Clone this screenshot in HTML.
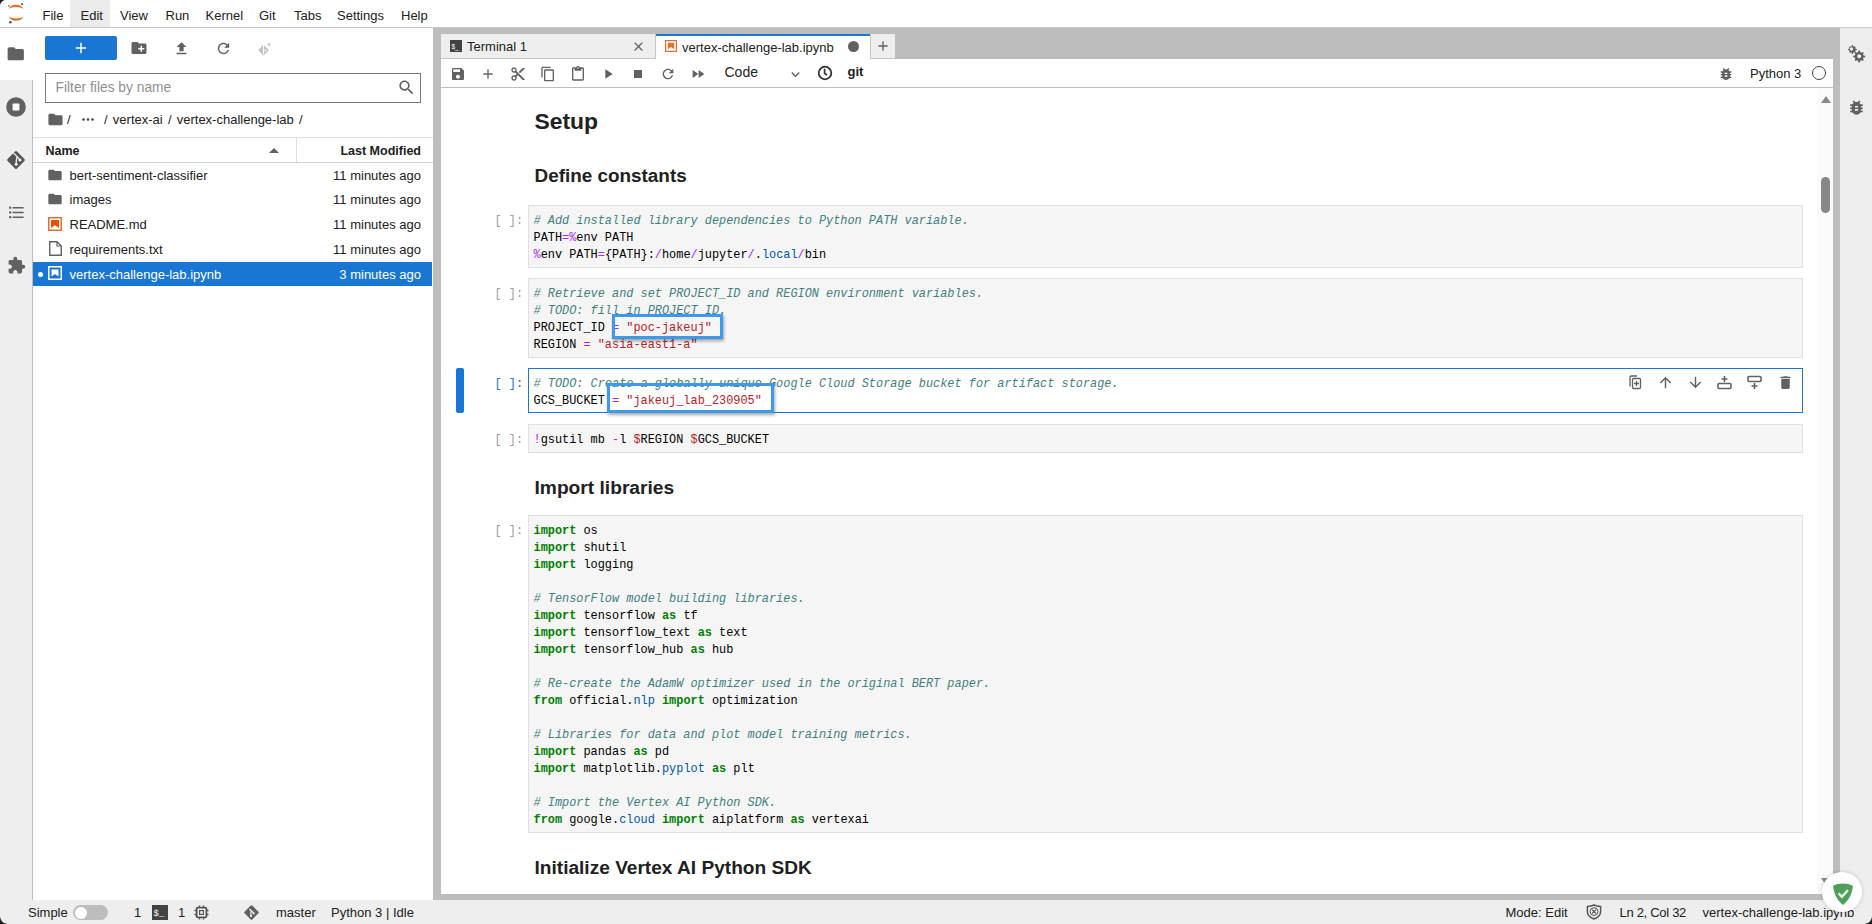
<!DOCTYPE html>
<html><head><meta charset="utf-8">
<style>
*{box-sizing:border-box;margin:0;padding:0}
html,body{width:1872px;height:924px;overflow:hidden;background:#fff;font-family:"Liberation Sans",sans-serif;font-size:13px;color:#212121;position:relative}
.a{position:absolute}
.t{position:absolute;white-space:pre}
svg{position:absolute;overflow:visible}
.k{color:#008000;font-weight:bold}
.c{color:#408080;font-style:italic}
.s{color:#ba2121}
.o{color:#aa22ff}
.p{color:#0055aa}
.n{color:#008000}
</style></head>
<body>

<div class="a" style="left:0px;top:0px;width:1872px;height:27px;background:#fff;"></div>
<div class="a" style="left:0px;top:27px;width:1872px;height:1px;background:#c8c8c8;"></div>
<div class="a" style="left:70px;top:0px;width:40px;height:27px;background:#ebebeb;"></div>
<div class="a" style="left:0px;top:28px;width:33px;height:872px;background:#eeeeee;"></div>
<div class="a" style="left:32px;top:80px;width:1px;height:820px;background:#bdbdbd;"></div>
<div class="a" style="left:0px;top:28px;width:33px;height:52px;background:#fff;"></div>
<div class="a" style="left:33px;top:28px;width:400px;height:872px;background:#fff;"></div>
<div class="a" style="left:433px;top:28px;width:1407px;height:872px;background:#bdbdbd;"></div>
<div class="a" style="left:1840px;top:28px;width:32px;height:872px;background:#eeeeee;"></div>
<div class="a" style="left:0px;top:900px;width:1872px;height:24px;background:#eeeeee;"></div>
<div class="t" style="left:42.5px;top:9.00px;font-size:13px;line-height:13px;color:#212121;font-weight:normal;font-family:'Liberation Sans',sans-serif;">File</div>
<div class="t" style="left:80.5px;top:9.00px;font-size:13px;line-height:13px;color:#212121;font-weight:normal;font-family:'Liberation Sans',sans-serif;">Edit</div>
<div class="t" style="left:120px;top:9.00px;font-size:13px;line-height:13px;color:#212121;font-weight:normal;font-family:'Liberation Sans',sans-serif;">View</div>
<div class="t" style="left:165.5px;top:9.00px;font-size:13px;line-height:13px;color:#212121;font-weight:normal;font-family:'Liberation Sans',sans-serif;">Run</div>
<div class="t" style="left:205.5px;top:9.00px;font-size:13px;line-height:13px;color:#212121;font-weight:normal;font-family:'Liberation Sans',sans-serif;">Kernel</div>
<div class="t" style="left:259px;top:9.00px;font-size:13px;line-height:13px;color:#212121;font-weight:normal;font-family:'Liberation Sans',sans-serif;">Git</div>
<div class="t" style="left:294px;top:9.00px;font-size:13px;line-height:13px;color:#212121;font-weight:normal;font-family:'Liberation Sans',sans-serif;">Tabs</div>
<div class="t" style="left:337px;top:9.00px;font-size:13px;line-height:13px;color:#212121;font-weight:normal;font-family:'Liberation Sans',sans-serif;">Settings</div>
<div class="t" style="left:401px;top:9.00px;font-size:13px;line-height:13px;color:#212121;font-weight:normal;font-family:'Liberation Sans',sans-serif;">Help</div>
<svg style="left:0px;top:0px" width="30" height="27" viewBox="0 0 30 27">
<path d="M8.6 9 C10.5 3.2 21.5 3.2 23.4 9 C20.5 6.3 11.5 6.3 8.6 9Z" fill="#e46e2e"/>
<path d="M8.6 16.2 C10.5 22.2 21.5 22.2 23.4 16.2 C20.5 19.2 11.5 19.2 8.6 16.2Z" fill="#e46e2e"/>
<circle cx="22.2" cy="4.2" r="1.1" fill="#616262"/>
<circle cx="8.9" cy="5.8" r="0.9" fill="#767677"/>
<circle cx="10.3" cy="22.2" r="1.25" fill="#4d4d4d"/>
</svg>
<svg style="left:0;top:0" width="6" height="6" viewBox="0 0 6 6"><path d="M0 6C0 2.7 2.7 0 6 0H0Z" fill="#1c1c1c"/></svg>
<svg style="left:6.25px;top:44.25px;" width="19.5" height="19.5" viewBox="0 0 24 24"><path fill="#616161" d="M10 4H4c-1.1 0-1.99.9-1.99 2L2 18c0 1.1.9 2 2 2h16c1.1 0 2-.9 2-2V8c0-1.1-.9-2-2-2h-8l-2-2z"/></svg>
<svg style="left:6.2px;top:96.8px" width="20" height="20" viewBox="0 0 20 20"><circle cx="10" cy="10" r="9.8" fill="#616161"/><rect x="6.6" y="6.6" width="6.8" height="6.8" fill="#fff" rx="0.6"/></svg>
<svg style="left:0px;top:145px" width="33" height="30" viewBox="0 145 33 30"><rect x="9.3" y="153.3" width="13.4" height="13.4" rx="1.5" transform="rotate(45 16 160)" fill="#555"/><path d="M13.2 152.6 L17.2 156.8 L20.3 160.3 M17 157 C16.2 159 16.2 161 16.2 164" fill="none" stroke="#eee" stroke-width="1.3"/><circle cx="16.2" cy="164.2" r="1.5" fill="#eee"/><circle cx="20" cy="160" r="1.6" fill="#eee"/></svg>
<svg style="left:6.70px;top:203.10px;" width="19" height="19" viewBox="0 0 24 24"><path fill="#616161" d="M4 10.5c-.83 0-1.5.67-1.5 1.5s.67 1.5 1.5 1.5 1.5-.67 1.5-1.5-.67-1.5-1.5-1.5zm0-6c-.83 0-1.5.67-1.5 1.5S3.17 7.5 4 7.5 5.5 6.83 5.5 6 4.830 4.5 4 4.5zm0 12c-.83 0-1.5.68-1.5 1.5s.68 1.5 1.5 1.5 1.5-.68 1.5-1.5-.67-1.5-1.5-1.5zM7 19h14v-2H7v2zm0-6h14v-2H7v2zm0-8v2h14V5H7z"/></svg>
<svg style="left:7.00px;top:256.00px;" width="19" height="19" viewBox="0 0 24 24"><path fill="#616161" d="M20.5 11H19V7c0-1.1-.9-2-2-2h-4V3.5C13 2.12 11.88 1 10.5 1S8 2.12 8 3.5V5H4c-1.1 0-1.99.9-1.99 2v3.8H3.5c1.49 0 2.7 1.21 2.7 2.7s-1.21 2.7-2.7 2.7H2V20c0 1.1.9 2 2 2h3.8v-1.5c0-1.49 1.21-2.7 2.7-2.7 1.49 0 2.7 1.21 2.7 2.7V22H17c1.1 0 2-.9 2-2v-4h1.5c1.38 0 2.5-1.12 2.5-2.5S21.88 11 20.5 11z"/></svg>
<div class="a" style="left:45px;top:36px;width:72px;height:24px;background:#1976d2;border-radius:2px;"></div>
<svg style="left:72.00px;top:39.00px;" width="18" height="18" viewBox="0 0 24 24"><path fill="#fff" d="M19 13h-6v6h-2v-6H5v-2h6V5h2v6h6v2z"/></svg>
<svg style="left:130.00px;top:39.00px;" width="18" height="18" viewBox="0 0 24 24"><path fill="#616161" d="M20 6h-8l-2-2H4c-1.1 0-1.99.9-1.99 2L2 18c0 1.1.9 2 2 2h16c1.1 0 2-.9 2-2V8c0-1.1-.9-2-2-2zm-1 8h-3v3h-2v-3h-3v-2h3V9h2v3h3v2z"/></svg>
<svg style="left:172.50px;top:39.50px;" width="17" height="17" viewBox="0 0 24 24"><path fill="#616161" d="M9 16h6v-6h4l-7-7-7 7h4zm-4 2h14v2H5z"/></svg>
<svg style="left:214.50px;top:39.50px;" width="17" height="17" viewBox="0 0 24 24"><path fill="#616161" d="M17.65 6.35C16.2 4.9 14.21 4 12 4c-4.42 0-7.99 3.58-7.99 8s3.57 8 7.99 8c3.73 0 6.84-2.55 7.73-6h-2.08c-.82 2.33-3.04 4-5.65 4-3.31 0-6-2.690-6-6s2.69-6 6-6c1.66 0 3.14.69 4.22 1.78L13 11h7V4l-2.35 2.35z"/></svg>
<svg style="left:250px;top:36px" width="30" height="26" viewBox="250 36 30 26"><rect x="259.6" y="46.2" width="7.8" height="7.8" rx="1" transform="rotate(45 263.5 50.1)" fill="#c4c4c4"/><path d="M263.6 45.2V54" stroke="#fff" stroke-width="1"/><circle cx="265.5" cy="50.3" r="0.9" fill="#fff"/><rect x="267.5" y="43" width="3" height="3" transform="rotate(45 269 44.5)" fill="#cfcfcf"/></svg>
<div class="a" style="left:45px;top:73px;width:376px;height:30px;border:1px solid #7a7a7a;background:#fff"></div>
<div class="t" style="left:55.5px;top:81.32px;font-size:13.8px;line-height:13.8px;color:#8f8f8f;font-weight:normal;font-family:'Liberation Sans',sans-serif;">Filter files by name</div>
<svg style="left:396.50px;top:77.50px;" width="19" height="19" viewBox="0 0 24 24"><path fill="#616161" d="M15.5 14h-.79l-.28-.27C15.41 12.59 16 11.11 16 9.5 16 5.91 13.09 3 9.5 3S3 5.91 3 9.5 5.91 16 9.5 16c1.61 0 3.09-.59 4.230-1.57l.27.28v.79l5 4.99L20.49 19l-4.99-5zm-6 0C7.01 14 5 11.99 5 9.5S7.01 5 9.5 5 14 7.01 14 9.5 11.99 14 9.5 14z"/></svg>
<svg style="left:46.50px;top:111.00px;" width="17" height="17" viewBox="0 0 24 24"><path fill="#616161" d="M10 4H4c-1.1 0-1.99.9-1.99 2L2 18c0 1.1.9 2 2 2h16c1.1 0 2-.9 2-2V8c0-1.1-.9-2-2-2h-8l-2-2z"/></svg>
<div class="t" style="left:67px;top:113.00px;font-size:13px;line-height:13px;color:#212121;font-weight:normal;font-family:'Liberation Sans',sans-serif;">/</div>
<svg style="left:82px;top:118px" width="12" height="3" viewBox="0 0 12 3"><circle cx="1.5" cy="1.5" r="1.3" fill="#424242"/><circle cx="6" cy="1.5" r="1.3" fill="#424242"/><circle cx="10.5" cy="1.5" r="1.3" fill="#424242"/></svg>
<div class="t" style="left:104px;top:113.00px;font-size:13px;line-height:13px;color:#212121;font-weight:normal;font-family:'Liberation Sans',sans-serif;word-spacing:1.6px;">/ vertex-ai / vertex-challenge-lab /</div>
<div class="a" style="left:33px;top:137px;width:400px;height:1px;background:#e0e0e0;"></div>
<div class="a" style="left:33px;top:162px;width:400px;height:1px;background:#d0d0d0;"></div>
<div class="a" style="left:296px;top:138px;width:1px;height:24px;background:#e0e0e0;"></div>
<div class="t" style="left:45.5px;top:145.42px;font-size:12.5px;line-height:12.5px;color:#212121;font-weight:bold;font-family:'Liberation Sans',sans-serif;">Name</div>
<svg style="left:269px;top:147.5px" width="10" height="5" viewBox="0 0 10 5"><path d="M0 5L5 0L10 5Z" fill="#616161"/></svg>
<div class="t" style="left:300px;width:121px;text-align:right;top:145.4px;font-size:12.5px;line-height:12.5px;font-weight:bold">Last Modified</div>
<svg style="left:46.80px;top:166.80px;" width="16" height="16" viewBox="0 0 24 24"><path fill="#616161" d="M10 4H4c-1.1 0-1.99.9-1.99 2L2 18c0 1.1.9 2 2 2h16c1.1 0 2-.9 2-2V8c0-1.1-.9-2-2-2h-8l-2-2z"/></svg>
<div class="t" style="left:69.5px;top:169.00px;font-size:13px;line-height:13px;color:#212121;font-weight:normal;font-family:'Liberation Sans',sans-serif;">bert-sentiment-classifier</div>
<div class="t" style="left:300px;width:121px;text-align:right;top:169.00px;font-size:13px;line-height:13px;color:#212121">11 minutes ago</div>
<svg style="left:46.80px;top:190.80px;" width="16" height="16" viewBox="0 0 24 24"><path fill="#616161" d="M10 4H4c-1.1 0-1.99.9-1.99 2L2 18c0 1.1.9 2 2 2h16c1.1 0 2-.9 2-2V8c0-1.1-.9-2-2-2h-8l-2-2z"/></svg>
<div class="t" style="left:69.5px;top:193.00px;font-size:13px;line-height:13px;color:#212121;font-weight:normal;font-family:'Liberation Sans',sans-serif;">images</div>
<div class="t" style="left:300px;width:121px;text-align:right;top:193.00px;font-size:13px;line-height:13px;color:#212121">11 minutes ago</div>
<svg style="left:48px;top:216.8px" width="14" height="14" viewBox="0 0 14 14"><rect x="0.75" y="0.75" width="12.5" height="12.5" fill="#fff" stroke="#e46e2e" stroke-width="1.5"/><path d="M3 3H11V11L7 8.3L3 11Z" fill="#e65100"/></svg>
<div class="t" style="left:69.5px;top:218.00px;font-size:13px;line-height:13px;color:#212121;font-weight:normal;font-family:'Liberation Sans',sans-serif;">README.md</div>
<div class="t" style="left:300px;width:121px;text-align:right;top:218.00px;font-size:13px;line-height:13px;color:#212121">11 minutes ago</div>
<svg style="left:49px;top:240.8px" width="13" height="15" viewBox="0 0 13 15"><path d="M0.75 0.75H8L12.25 5V14.25H0.75Z" fill="none" stroke="#616161" stroke-width="1.4"/><path d="M8 0.75V5H12.25" fill="none" stroke="#616161" stroke-width="1.2"/></svg>
<div class="t" style="left:69.5px;top:242.50px;font-size:13px;line-height:13px;color:#212121;font-weight:normal;font-family:'Liberation Sans',sans-serif;">requirements.txt</div>
<div class="t" style="left:300px;width:121px;text-align:right;top:242.50px;font-size:13px;line-height:13px;color:#212121">11 minutes ago</div>
<div class="a" style="left:33px;top:262px;width:399px;height:24px;background:#1976d2;"></div>
<div class="a" style="left:38px;top:272px;width:5px;height:5px;border-radius:50%;background:#fff"></div>
<svg style="left:48px;top:266.3px" width="14" height="14" viewBox="0 0 14 14"><rect x="0.75" y="0.75" width="12.5" height="12.5" fill="none" stroke="#fff" stroke-width="1.5"/><path d="M3.5 3.5H10.5V10.5L7 8L3.5 10.5Z" fill="#fff"/></svg>
<div class="t" style="left:69.5px;top:267.50px;font-size:13px;line-height:13px;color:#fff;font-weight:normal;font-family:'Liberation Sans',sans-serif;">vertex-challenge-lab.ipynb</div>
<div class="t" style="left:300px;width:121px;text-align:right;top:267.50px;font-size:13px;line-height:13px;color:#fff">3 minutes ago</div>
<div class="a" style="left:441px;top:34px;width:215px;height:25px;background:#eeeeee;border-right:1px solid #c6c6c6;border-bottom:1px solid #c6c6c6;"></div>
<svg style="left:450px;top:40px" width="12" height="12" viewBox="0 0 12 12"><rect width="12" height="12" fill="#424242"/><text x="1.5" y="8.5" font-family="Liberation Sans" font-size="6.5" fill="#fff">$_</text></svg>
<div class="t" style="left:467px;top:40.00px;font-size:13px;line-height:13px;color:#212121;font-weight:normal;font-family:'Liberation Sans',sans-serif;">Terminal 1</div>
<svg style="left:631.00px;top:38.50px;" width="15" height="15" viewBox="0 0 24 24"><path fill="#616161" d="M19 6.41L17.59 5 12 10.59 6.41 5 5 6.41 10.59 12 5 17.59 6.41 19 12 13.41 17.59 19 19 17.59 13.41 12z"/></svg>
<div class="a" style="left:656px;top:34px;width:214px;height:26px;background:#fff;"></div>
<div class="a" style="left:656px;top:34px;width:214px;height:2px;background:#1976d2;"></div>
<svg style="left:665px;top:40px" width="12" height="12" viewBox="0 0 12 12"><rect x="0.6" y="0.6" width="10.8" height="10.8" fill="#fff" stroke="#e46e2e" stroke-width="1.2"/><path d="M2.8 2.8H9.2V9.2L6 7L2.8 9.2Z" fill="#e46e2e"/></svg>
<div class="t" style="left:682px;top:41.00px;font-size:13px;line-height:13px;color:#212121;font-weight:normal;font-family:'Liberation Sans',sans-serif;">vertex-challenge-lab.ipynb</div>
<div class="a" style="left:848px;top:41px;width:11px;height:11px;border-radius:50%;background:#616161"></div>
<div class="a" style="left:870px;top:34px;width:25px;height:25px;background:#eeeeee;border-left:1px solid #c6c6c6;border-bottom:1px solid #c6c6c6;"></div>
<svg style="left:875.00px;top:38.00px;" width="16" height="16" viewBox="0 0 24 24"><path fill="#616161" d="M19 13h-6v6h-2v-6H5v-2h6V5h2v6h6v2z"/></svg>
<div class="a" style="left:441px;top:59px;width:1392px;height:29px;background:#fff;"></div>
<div class="a" style="left:441px;top:87px;width:1392px;height:1px;background:#bdbdbd;"></div>
<svg style="left:450.00px;top:66.00px;" width="16" height="16" viewBox="0 0 24 24"><path fill="#616161" d="M17 3H5c-1.11 0-2 .9-2 2v14c0 1.1.89 2 2 2h14c1.1 0 2-.9 2-2V7l-4-4zm-5 16c-1.66 0-3-1.34-3-3s1.34-3 3-3 3 1.34 3 3-1.34 3-3 3zm3-10H5V5h10v4z"/></svg>
<svg style="left:480.00px;top:66.00px;" width="16" height="16" viewBox="0 0 24 24"><path fill="#616161" d="M19 13h-6v6h-2v-6H5v-2h6V5h2v6h6v2z"/></svg>
<svg style="left:509.60px;top:66.00px;" width="16" height="16" viewBox="0 0 24 24"><path fill="#616161" d="M9.64 7.64c.23-.5.36-1.05.36-1.640 0-2.21-1.79-4-4-4S2 3.79 2 6s1.79 4 4 4c.59 0 1.14-.13 1.64-.36L10 12l-2.36 2.36C7.14 14.13 6.59 14 6 14c-2.21 0-4 1.79-4 4s1.79 4 4 4 4-1.79 4-4c0-.59-.13-1.14-.36-1.64L12 14l7 7h3v-1L9.64 7.64zM6 8c-1.1 0-2-.89-2-2s.9-2 2-2 2 .89 2 2-.9 2-2 2zm0 12c-1.1 0-2-.89-2-2s.9-2 2-2 2 .89 2 2-.9 2-2 2zm6-7.5c-.28 0-.5-.22-.5-.5s.22-.5.5-.5.5.22.5.5-.22.5-.5.5zM19 3l-6 6 2 2 7-7V3z"/></svg>
<svg style="left:539.70px;top:66.00px;" width="16" height="16" viewBox="0 0 24 24"><path fill="#616161" d="M16 1H4c-1.1 0-2 .9-2 2v14h2V3h12V1zm3 4H8c-1.1 0-2 .9-2 2v14c0 1.1.9 2 2 2h11c1.1 0 2-.9 2-2V7c0-1.1-.9-2-2-2zm0 16H8V7h11v14z"/></svg>
<svg style="left:569.90px;top:66.00px;" width="16" height="16" viewBox="0 0 24 24"><path fill="#616161" d="M19 2h-4.18C14.4.84 13.3 0 12 0c-1.3 0-2.4.84-2.82 2H5c-1.1 0-2 .9-2 2v16c0 1.1.9 2 2 2h14c1.1 0 2-.9 2-2V4c0-1.1-.9-2-2-2zm-7 0c.55 0 1 .45 1 1s-.45 1-1 1-1-.45-1-1 .45-1 1-1zm7 18H5V4h2v3h10V4h2v16z"/></svg>
<svg style="left:600.00px;top:66.00px;" width="16" height="16" viewBox="0 0 24 24"><path fill="#616161" d="M8 5v14l11-7z"/></svg>
<svg style="left:630.00px;top:66.00px;" width="16" height="16" viewBox="0 0 24 24"><path fill="#616161" d="M6 6h12v12H6z"/></svg>
<svg style="left:660.00px;top:66.00px;" width="16" height="16" viewBox="0 0 24 24"><path fill="#616161" d="M17.65 6.35C16.2 4.9 14.21 4 12 4c-4.42 0-7.99 3.58-7.99 8s3.57 8 7.99 8c3.73 0 6.84-2.55 7.73-6h-2.08c-.82 2.33-3.04 4-5.65 4-3.31 0-6-2.690-6-6s2.69-6 6-6c1.66 0 3.14.69 4.22 1.78L13 11h7V4l-2.35 2.35z"/></svg>
<svg style="left:690.00px;top:66.00px;" width="16" height="16" viewBox="0 0 24 24"><path fill="#616161" d="M4 18l8.5-6L4 6v12zm9-12v12l8.5-6L13 6z"/></svg>
<div class="t" style="left:724.5px;top:64.95px;font-size:14px;line-height:14px;color:#212121;font-weight:normal;font-family:'Liberation Sans',sans-serif;">Code</div>
<svg style="left:786.50px;top:66.00px;" width="17" height="17" viewBox="0 0 24 24"><path fill="#616161" d="M16.59 8.59L12 13.17 7.41 8.59 6 10l6 6 6-6z"/></svg>
<svg style="left:817.3px;top:64.6px" width="16" height="16" viewBox="0 0 16 16"><circle cx="8" cy="8" r="6.3" fill="none" stroke="#333" stroke-width="1.8"/><path d="M7.6 3.8V8.3L10 10" fill="none" stroke="#333" stroke-width="1.7"/></svg>
<div class="t" style="left:847.5px;top:65.00px;font-size:13px;line-height:13px;color:#212121;font-weight:bold;font-family:'Liberation Sans',sans-serif;">git</div>
<svg style="left:1717.50px;top:65.70px;" width="16" height="16" viewBox="0 0 24 24"><path fill="#616161" d="M20 8h-2.81c-.45-.78-1.07-1.45-1.82-1.96L17 4.41 15.59 3l-2.17 2.17C12.96 5.06 12.49 5 12 5c-.49 0-.96.06-1.41.17L8.410 3 7 4.41l1.62 1.63C7.88 6.55 7.26 7.22 6.81 8H4v2h2.09c-.05.33-.09.66-.09 1v1H4v2h2v1c0 .34.04.67.09 1H4v2h2.81c1.04 1.79 2.97 3 5.19 3s4.15-1.21 5.19-3H20v-2h-2.09c.05-.33.09-.66.09-1v-1h2v-2h-2v-1c0-.34-.04-.67-.09-1H20V8zm-6 8h-4v-2h4v2zm0-4h-4v-2h4v2z"/></svg>
<div class="t" style="left:1750px;top:67.00px;font-size:13px;line-height:13px;color:#212121;font-weight:normal;font-family:'Liberation Sans',sans-serif;">Python 3</div>
<div class="a" style="left:1811.5px;top:65.8px;width:14.5px;height:14.5px;border-radius:50%;border:1.5px solid #424242"></div>
<div class="a" style="left:441px;top:88px;width:1392px;height:806px;background:#fff;"></div>
<div class="a" style="left:1817px;top:88px;width:16px;height:806px;background:#fbfbfb;"></div>
<svg style="left:1821px;top:96px" width="10" height="7" viewBox="0 0 10 7"><path d="M0 7L5 0L10 7Z" fill="#888"/></svg>
<svg style="left:1821px;top:878px" width="10" height="7" viewBox="0 0 10 7"><path d="M0 0L5 7L10 0Z" fill="#888"/></svg>
<div class="a" style="left:1821px;top:177px;width:9px;height:36px;background:#888;border-radius:5px;"></div>
<div class="t" style="left:534.5px;top:109.62px;font-size:22.9px;line-height:22.9px;color:#212121;font-weight:bold;font-family:'Liberation Sans',sans-serif;">Setup</div>
<div class="t" style="left:534.5px;top:167.20px;font-size:18.9px;line-height:18.9px;color:#212121;font-weight:bold;font-family:'Liberation Sans',sans-serif;">Define constants</div>
<div class="t" style="left:534.5px;top:477.75px;font-size:19.2px;line-height:19.2px;color:#212121;font-weight:bold;font-family:'Liberation Sans',sans-serif;">Import libraries</div>
<div class="t" style="left:534.5px;top:857.63px;font-size:19.1px;line-height:19.1px;color:#212121;font-weight:bold;font-family:'Liberation Sans',sans-serif;">Initialize Vertex AI Python SDK</div>
<div class="a" style="left:528px;top:205px;width:1275px;height:63px;background:#f5f5f5;border:1px solid #e0e0e0;"></div>
<div class="t" style="left:494.5px;top:213.33px;font-family:'Liberation Mono',monospace;font-size:11.9px;line-height:17px;color:#9e9e9e">[ ]:</div>
<div class="t" style="left:533.5px;top:213.33px;font-family:'Liberation Mono',monospace;font-size:11.9px;line-height:17px;color:#000"><span class="c"># Add installed library dependencies to Python PATH variable.</span>
PATH<span class="o">=%</span>env PATH
<span class="o">%</span>env PATH<span class="o">=</span>{PATH}:<span class="o">/</span>home<span class="o">/</span>jupyter<span class="o">/</span>.<span class="p">local</span><span class="o">/</span>bin</div>
<div class="a" style="left:528px;top:278px;width:1275px;height:80px;background:#f5f5f5;border:1px solid #e0e0e0;"></div>
<div class="t" style="left:494.5px;top:286.33px;font-family:'Liberation Mono',monospace;font-size:11.9px;line-height:17px;color:#9e9e9e">[ ]:</div>
<div class="t" style="left:533.5px;top:286.33px;font-family:'Liberation Mono',monospace;font-size:11.9px;line-height:17px;color:#000"><span class="c"># Retrieve and set PROJECT_ID and REGION environment variables.</span>
<span class="c"># TODO: fill in PROJECT_ID.</span>
PROJECT_ID <span class="o">=</span> <span class="s">&quot;poc-jakeuj&quot;</span>
REGION <span class="o">=</span> <span class="s">&quot;asia-east1-a&quot;</span></div>
<div class="a" style="left:528px;top:368px;width:1275px;height:45px;background:#fff;border:1px solid #1976d2;"></div>
<div class="a" style="left:456px;top:368px;width:8px;height:45px;background:#1976d2;border-radius:2px;"></div>
<div class="t" style="left:494.5px;top:376.33px;font-family:'Liberation Mono',monospace;font-size:11.9px;line-height:17px;color:#1976d2">[ ]:</div>
<div class="t" style="left:533.5px;top:376.33px;font-family:'Liberation Mono',monospace;font-size:11.9px;line-height:17px;color:#000"><span class="c"># TODO: Create a globally unique Google Cloud Storage bucket for artifact storage.</span>
GCS_BUCKET <span class="o">=</span> <span class="s">&quot;jakeuj_lab_230905&quot;</span></div>
<div class="a" style="left:528px;top:424px;width:1275px;height:29px;background:#f5f5f5;border:1px solid #e0e0e0;"></div>
<div class="t" style="left:494.5px;top:432.33px;font-family:'Liberation Mono',monospace;font-size:11.9px;line-height:17px;color:#9e9e9e">[ ]:</div>
<div class="t" style="left:533.5px;top:432.33px;font-family:'Liberation Mono',monospace;font-size:11.9px;line-height:17px;color:#000"><span class="o">!</span>gsutil mb <span class="o">-</span>l <span class="s">$</span>REGION <span class="s">$</span>GCS_BUCKET</div>
<div class="a" style="left:528px;top:515px;width:1275px;height:318px;background:#f5f5f5;border:1px solid #e0e0e0;"></div>
<div class="t" style="left:494.5px;top:523.33px;font-family:'Liberation Mono',monospace;font-size:11.9px;line-height:17px;color:#9e9e9e">[ ]:</div>
<div class="t" style="left:533.5px;top:523.33px;font-family:'Liberation Mono',monospace;font-size:11.9px;line-height:17px;color:#000"><span class="k">import</span> os
<span class="k">import</span> shutil
<span class="k">import</span> logging

<span class="c"># TensorFlow model building libraries.</span>
<span class="k">import</span> tensorflow <span class="k">as</span> tf
<span class="k">import</span> tensorflow_text <span class="k">as</span> text
<span class="k">import</span> tensorflow_hub <span class="k">as</span> hub

<span class="c"># Re-create the AdamW optimizer used in the original BERT paper.</span>
<span class="k">from</span> official.<span class="p">nlp</span> <span class="k">import</span> optimization

<span class="c"># Libraries for data and plot model training metrics.</span>
<span class="k">import</span> pandas <span class="k">as</span> pd
<span class="k">import</span> matplotlib.<span class="p">pyplot</span> <span class="k">as</span> plt

<span class="c"># Import the Vertex AI Python SDK.</span>
<span class="k">from</span> google.<span class="p">cloud</span> <span class="k">import</span> aiplatform <span class="k">as</span> vertexai</div>
<svg style="left:1656.50px;top:374.00px;" width="17" height="17" viewBox="0 0 24 24"><path fill="#616161" d="M4 12l1.41 1.41L11 7.83V20h2V7.83l5.58 5.59L20 12l-8-8-8 8z"/></svg>
<svg style="left:1686.50px;top:374.00px;" width="17" height="17" viewBox="0 0 24 24"><path fill="#616161" d="M20 12l-1.41-1.41L13 16.17V4h-2v12.17l-5.58-5.59L4 12l8 8 8-8z"/></svg>
<svg style="left:1627px;top:374px" width="16" height="16" viewBox="0 0 16 16"><path d="M3 12.5V3.2C3 2.5 3.5 2 4.2 2H10" fill="none" stroke="#616161" stroke-width="1.3"/><rect x="5.5" y="4.5" width="8" height="10" rx="1" fill="none" stroke="#616161" stroke-width="1.3"/><path d="M9.5 7v5M7 9.5h5" stroke="#616161" stroke-width="1.3"/></svg>
<svg style="left:1716px;top:374px" width="17" height="17" viewBox="0 0 17 17"><rect x="2" y="9.5" width="13" height="5" rx="1" fill="none" stroke="#616161" stroke-width="1.6"/><path d="M8.5 2v6M5.5 5h6" stroke="#616161" stroke-width="1.6"/></svg>
<svg style="left:1746px;top:374px" width="17" height="17" viewBox="0 0 17 17"><rect x="2" y="2.5" width="13" height="5" rx="1" fill="none" stroke="#616161" stroke-width="1.6"/><path d="M8.5 9v6M5.5 12h6" stroke="#616161" stroke-width="1.6"/></svg>
<svg style="left:1776.50px;top:374.00px;" width="17" height="17" viewBox="0 0 24 24"><path fill="#616161" d="M6 19c0 1.1.9 2 2 2h8c1.1 0 2-.9 2-2V7H6v12zM19 4h-3.5l-1-1h-5l-1 1H5v2h14V4z"/></svg>
<div class="a" style="left:612px;top:314px;width:111px;height:25px;border:3px solid #3d9ae8;box-shadow:1px 2px 3px rgba(0,0,0,0.35)"></div>
<div class="a" style="left:607px;top:383px;width:167px;height:30px;border:3px solid #3d9ae8;box-shadow:1px 2px 3px rgba(0,0,0,0.35)"></div>
<svg style="left:1847px;top:44px" width="18" height="18" viewBox="0 0 18 18">
<g fill="#616161">
<path d="M5 0.8l0.9 0.3 0.2 1.1 0.9 0.5 1-0.5 0.7 0.7-0.5 1 0.5 0.9 1.1 0.2 0 1-1.1 0.2-0.5 0.9 0.5 1-0.7 0.7-1-0.5-0.9 0.5-0.2 1.1-1 0-0.2-1.1-0.9-0.5-1 0.5-0.7-0.7 0.5-1-0.5-0.9-1.1-0.2 0-1 1.1-0.2 0.5-0.9-0.5-1 0.7-0.7 1 0.5 0.9-0.5 0.2-1.1z M4.5 3.3a1.7 1.7 0 1 0 0.01 0z" fill-rule="evenodd"/>
<path d="M11.5 6.5l1.4 0 0.3 1.6 1.2 0.6 1.4-0.8 1 1-0.8 1.4 0.6 1.2 1.6 0.3 0 1.4-1.6 0.3-0.6 1.2 0.8 1.4-1 1-1.4-0.8-1.2 0.6-0.3 1.6-1.4 0-0.3-1.6-1.2-0.6-1.4 0.8-1-1 0.8-1.4-0.6-1.2-1.6-0.3 0-1.4 1.6-0.3 0.6-1.2-0.8-1.4 1-1 1.4 0.8 1.2-0.6z M12.2 10.2a2 2 0 1 0 0.01 0z" fill-rule="evenodd"/>
</g></svg>
<svg style="left:1846.50px;top:97.50px;" width="19" height="19" viewBox="0 0 24 24"><path fill="#616161" d="M20 8h-2.81c-.45-.78-1.07-1.45-1.82-1.96L17 4.41 15.59 3l-2.17 2.17C12.96 5.06 12.49 5 12 5c-.49 0-.96.06-1.41.17L8.410 3 7 4.41l1.62 1.63C7.88 6.55 7.26 7.22 6.81 8H4v2h2.09c-.05.33-.09.66-.09 1v1H4v2h2v1c0 .34.04.67.09 1H4v2h2.81c1.04 1.79 2.97 3 5.19 3s4.15-1.21 5.19-3H20v-2h-2.09c.05-.33.09-.66.09-1v-1h2v-2h-2v-1c0-.34-.04-.67-.09-1H20V8zm-6 8h-4v-2h4v2zm0-4h-4v-2h4v2z"/></svg>
<div class="t" style="left:28px;top:905.50px;font-size:13px;line-height:13px;color:#212121;font-weight:normal;font-family:'Liberation Sans',sans-serif;">Simple</div>
<div class="a" style="left:73px;top:905px;width:35px;height:15px;background:#bdbdbd;border-radius:8px;"></div>
<div class="a" style="left:75px;top:906.5px;width:12px;height:12px;border-radius:50%;background:#fff"></div>
<div class="t" style="left:134px;top:905.50px;font-size:13px;line-height:13px;color:#212121;font-weight:normal;font-family:'Liberation Sans',sans-serif;">1</div>
<svg style="left:152px;top:905px" width="16" height="15" viewBox="0 0 16 15"><rect width="16" height="15" fill="#424242"/><text x="1.5" y="11" font-family="Liberation Mono" font-size="9" fill="#fff">$_</text></svg>
<div class="t" style="left:178px;top:905.50px;font-size:13px;line-height:13px;color:#212121;font-weight:normal;font-family:'Liberation Sans',sans-serif;">1</div>
<svg style="left:194px;top:905px" width="15" height="15" viewBox="0 0 15 15"><rect x="2.6" y="2.6" width="9.8" height="9.8" rx="1.2" fill="none" stroke="#555" stroke-width="1.8"/><rect x="5.6" y="5.6" width="3.8" height="3.8" fill="none" stroke="#555" stroke-width="1.2"/><path d="M5.5 0.5v2M9.5 0.5v2M5.5 12.5v2M9.5 12.5v2M0.5 5.5h2M0.5 9.5h2M12.5 5.5h2M12.5 9.5h2" stroke="#555" stroke-width="1.4"/></svg>
<svg style="left:243px;top:904px" width="17" height="17" viewBox="0 0 17 17"><rect x="3" y="3" width="11" height="11" rx="1.2" transform="rotate(45 8.5 8.5)" fill="#616161"/><path d="M6.5 5 L10.5 9" stroke="#eee" stroke-width="1.2"/><path d="M8 7 L8 12" stroke="#eee" stroke-width="1.2"/><circle cx="8" cy="12" r="1.1" fill="#eee"/><circle cx="10.7" cy="9.3" r="1.1" fill="#eee"/></svg>
<div class="t" style="left:276px;top:906.00px;font-size:13px;line-height:13px;color:#212121;font-weight:normal;font-family:'Liberation Sans',sans-serif;">master</div>
<div class="t" style="left:331px;top:905.50px;font-size:13px;line-height:13px;color:#212121;font-weight:normal;font-family:'Liberation Sans',sans-serif;">Python 3 | Idle</div>
<div class="t" style="left:1505.5px;top:906.00px;font-size:13px;line-height:13px;color:#212121;font-weight:normal;font-family:'Liberation Sans',sans-serif;">Mode: Edit</div>
<svg style="left:1585.5px;top:903.5px" width="16" height="16" viewBox="0 0 16 16"><path d="M8 1C10.2 2 12.4 2.4 14.6 2.6V7.5C14.6 10.8 12 13.6 8 15C4 13.6 1.4 10.8 1.4 7.5V2.6C3.6 2.4 5.8 2 8 1Z" fill="none" stroke="#555" stroke-width="1.5"/><circle cx="8" cy="7.6" r="3.9" fill="none" stroke="#555" stroke-width="1"/><path d="M6.1 5.7L9.9 9.5M9.9 5.7L6.1 9.5" stroke="#555" stroke-width="1.2"/></svg>
<div class="t" style="left:1619.5px;top:906.00px;font-size:13px;line-height:13px;color:#212121;font-weight:normal;font-family:'Liberation Sans',sans-serif;letter-spacing:-0.3px;">Ln 2, Col 32</div>
<div class="t" style="left:1702.5px;top:906.00px;font-size:13px;line-height:13px;color:#212121;font-weight:normal;font-family:'Liberation Sans',sans-serif;">vertex-challenge-lab.ipynb</div>
<div class="a" style="left:1822px;top:872px;width:40px;height:40px;border-radius:50%;background:#fff;box-shadow:0 0 4px rgba(0,0,0,0.18)"></div>
<svg style="left:1831.5px;top:883px" width="22" height="22" viewBox="0 0 20 20"><path d="M10 0.5C13 0.5 16.5 1.3 19 2.5C18.5 10 15 16 10 20C5 16 1.5 10 1 2.5C3.5 1.3 7 0.5 10 0.5Z" fill="#4da05a"/><path d="M6 9.5L9 12.5L14.5 6.5" fill="none" stroke="#e8f5e9" stroke-width="2.2"/></svg>
<svg style="left:0;top:916px" width="8" height="8" viewBox="0 0 8 8"><path d="M0 0C0 4.4 3.6 8 8 8H0Z" fill="#1c1c1c"/></svg>
<svg style="left:1864px;top:916px" width="8" height="8" viewBox="0 0 8 8"><path d="M8 0C8 4.4 4.4 8 0 8H8Z" fill="#1c1c1c"/></svg>
</body></html>
